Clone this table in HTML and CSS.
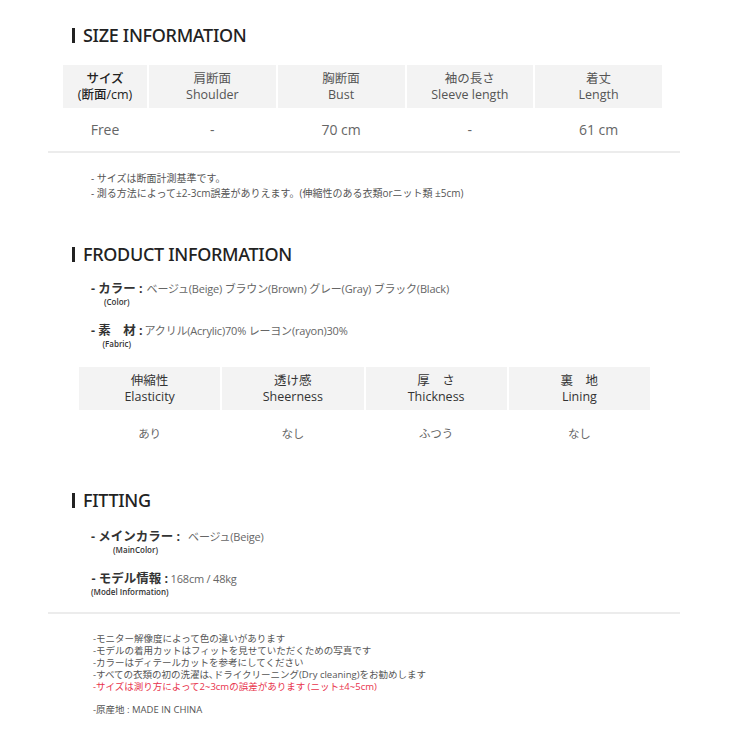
FILE: index.html
```html
<!DOCTYPE html>
<html lang="ja">

<head>
    <meta charset="UTF-8">
    <meta name="viewport" content="width=device-width, initial-scale=1.0">
    <title>Size / Product Information</title>
    <link rel="stylesheet" href="styles.css">
</head>

<body>
    <div class="page">

        <!-- SIZE INFORMATION -->
        <h2 class="title">SIZE INFORMATION</h2>
        <div class="size-table">
            <div class="cell head strong">サイズ<br>(断面/cm)</div>
            <div class="cell head">肩断面<br>Shoulder</div>
            <div class="cell head">胸断面<br>Bust</div>
            <div class="cell head">袖の長さ<br>Sleeve length</div>
            <div class="cell head">着丈<br>Length</div>
            <div class="cell value">Free</div>
            <div class="cell value">-</div>
            <div class="cell value">70 cm</div>
            <div class="cell value">-</div>
            <div class="cell value">61 cm</div>
        </div>
        <div class="divider"></div>
        <ul class="size-notes">
            <li>- サイズは断面計測基準です。</li>
            <li>- 測る方法によって±2-3cm誤差がありえます。(伸縮性のある衣類orニット類 ±5cm)</li>
        </ul>

        <!-- PRODUCT INFORMATION -->
        <h2 class="title title-product">FRODUCT INFORMATION</h2>
        <div class="info-row">
            <span class="label">- カラー :<small>(Color)</small></span>
            <span class="info-value">ベージュ(Beige) ブラウン(Brown) グレー(Gray) ブラック(Black)</span>
        </div>
        <div class="info-row">
            <span class="label">- 素　材 :<small>(Fabric)</small></span>
            <span class="info-value tight">アクリル(Acrylic)70% レーヨン(rayon)30%</span>
        </div>
        <div class="spec-table">
            <div class="cell head">伸縮性<br>Elasticity</div>
            <div class="cell head">透け感<br>Sheerness</div>
            <div class="cell head">厚　さ<br>Thickness</div>
            <div class="cell head">裏　地<br>Lining</div>
            <div class="cell value small">あり</div>
            <div class="cell value small">なし</div>
            <div class="cell value small">ふつう</div>
            <div class="cell value small">なし</div>
        </div>

        <!-- FITTING -->
        <h2 class="title title-fitting">FITTING</h2>
        <div class="info-row">
            <span class="label">- メインカラー :<small>(MainColor)</small></span>
            <span class="info-value wide">ベージュ(Beige)</span>
        </div>
        <div class="info-row">
            <span class="label">- モデル情報 :<small>(Model Information)</small></span>
            <span class="info-value tight">168cm / 48kg</span>
        </div>
        <div class="divider bottom"></div>

        <ul class="footer-notes">
            <li>-モニター解像度によって色の違いがあります</li>
            <li>-モデルの着用カットはフィットを見せていただくための写真です</li>
            <li>-カラーはディテールカットを参考にしてください</li>
            <li>-すべての衣類の初の洗濯は､ドライクリーニング(Dry cleaning)をお勧めします</li>
            <li class="warn">-サイズは測り方によって2~3cmの誤差があります (ニット±4~5cm)</li>
            <li class="origin">-原産地 : MADE IN CHINA</li>
        </ul>

    </div>
</body>

</html>
```

FILE: styles.css
```css
body {
    margin: 0;
    background: #fff;
    font-family: "Open Sans", "Noto Sans CJK JP", sans-serif;
    color: #555;
}

.page {
    width: 632px;
    margin-left: 48px;
    padding-top: 22px;
}

ul {
    list-style: none;
    margin: 0;
    padding: 0;
}

/* section titles */
.title {
    margin: 0 0 0 24px;
    font-family: "Noto Sans", sans-serif;
    font-size: 18px;
    font-weight: 500;
    line-height: 26px;
    color: #222;
    letter-spacing: -0.3px;
}

.title::before {
    content: "";
    display: inline-block;
    width: 3px;
    height: 15px;
    background: #222;
    margin-right: 8px;
    vertical-align: -1px;
}

.title-product {
    margin-top: 40px;
}

.title-fitting {
    margin-top: 31px;
}

/* tables */
.size-table,
.spec-table {
    display: grid;
    column-gap: 2px;
    text-align: center;
}

.size-table {
    width: 599px;
    margin: 17px 0 0 15px;
    grid-template-columns: 84px repeat(4, 1fr);
}

.spec-table {
    width: 571px;
    margin: 18px 0 0 31px;
    grid-template-columns: repeat(4, 1fr);
}

.cell {
    display: flex;
    align-items: center;
    justify-content: center;
}

.cell.head {
    height: 43px;
    background: #f3f3f3;
    font-size: 12.5px;
    line-height: 16px;
    color: #555;
}

.spec-table .cell.head {
    color: #333;
}

.cell.head.strong {
    color: #222;
    font-weight: 500;
}

.cell.value {
    height: 42px;
    font-size: 14px;
    color: #666;
}

.cell.value.small {
    height: 46px;
    font-size: 11.5px;
}

.divider {
    height: 2px;
    background: #ececec;
    margin-top: 1px;
}

.divider.bottom {
    margin-top: 15px;
}

.size-notes {
    margin: 18px 0 0 43px;
    font-size: 10px;
    line-height: 15px;
    color: #555;
}

/* info rows */
.info-row {
    display: flex;
    align-items: flex-start;
    margin: 16px 0 0 43px;
    height: 26px;
}

.title-product + .info-row {
    margin-top: 14px;
}

.title-fitting + .info-row {
    margin-top: 16px;
}

.label {
    display: inline-flex;
    flex-direction: column;
    align-items: center;
    font-size: 12.5px;
    font-weight: 700;
    line-height: 16px;
    color: #333;
}

.label small {
    display: block;
    font-size: 8px;
    font-weight: 600;
    line-height: 10px;
    color: #333;
}

.info-value {
    margin-left: 4px;
    font-size: 11px;
    line-height: 16px;
    color: #666;
    letter-spacing: -0.2px;
}

.info-value.tight {
    margin-left: 2px;
}

.info-value.wide {
    margin-left: 8px;
}

/* footer notes */
.footer-notes {
    margin: 19px 0 0 45px;
    font-size: 9.5px;
    line-height: 12px;
    color: #555;
}

.footer-notes .warn {
    color: #e8324b;
}

.footer-notes .origin {
    margin-top: 11px;
}
```
